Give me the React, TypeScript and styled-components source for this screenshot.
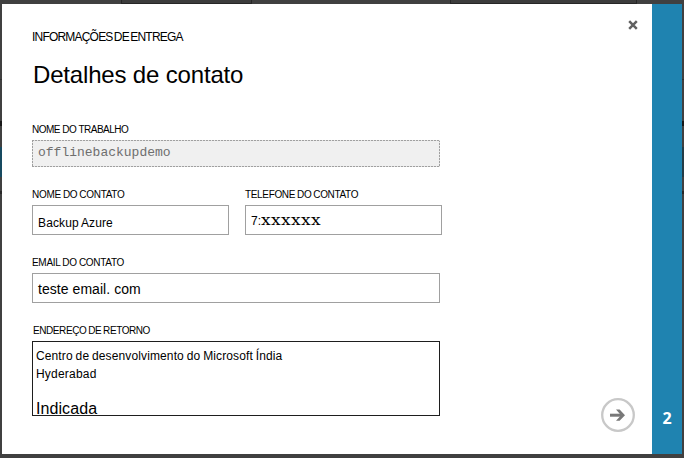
import React from "react";
import styled, { createGlobalStyle } from "styled-components";

const GlobalStyle = createGlobalStyle`
  * { box-sizing: border-box; }
  body { margin: 0; background: #404040; overflow: hidden; }
`;

const Backdrop = styled.div`
  display: grid;
  grid-template: 4px 450px 4px / 2px 680px 2px;
  width: 684px;
  height: 458px;
  background: #404040;
  color: #000;
  font-family: "Liberation Sans", Arial, sans-serif;
`;

const TopEdge = styled.div`
  grid-column: 1 / -1;
  display: flex;
  padding-left: 121px;
  gap: 198px;
`;

const TopPanel = styled.div<{ $width: number }>`
  width: ${(p) => p.$width}px;
  height: 4px;
  background: #3c3c3c;
  border: solid #262626;
  border-width: 0 1px 1px;
`;

const SideEdge = styled.div<{ $accent: string }>`
  background: linear-gradient(
    #404040 75px, #303030 75px 76px, #404040 76px 117px,
    #181818 117px 122px, #404040 122px 143px,
    ${(p) => p.$accent} 143px 173px, #404040 173px 187px,
    #282828 187px 190px, #404040 190px
  );
`;

const Dialog = styled.main`
  display: flex;
  background: #fff;
`;

const Content = styled.section`
  position: relative;
  width: 650px;
  padding: 25px 0 0 30px;
`;

const StepRail = styled.aside`
  display: flex;
  flex-direction: column;
  justify-content: flex-end;
  width: 30px;
  padding-bottom: 26px;
  background: #1f83b0;
  color: #fff;
  font: bold 16px/20px "Open Sans", sans-serif;
  text-align: center;
`;

const Eyebrow = styled.div`
  height: 16px;
  font-size: 12px;
  line-height: 16px;
  letter-spacing: -0.8px;
  word-spacing: -1.2px;
  white-space: nowrap;
`;

const Title = styled.h1`
  height: 32px;
  margin: 14px 0 0 1px;
  font-size: 24px;
  font-weight: 400;
  line-height: 32px;
  letter-spacing: -0.17px;
`;

const Form = styled.form`
  display: flex;
  flex-direction: column;
  margin-top: 33px;
`;

const FieldRow = styled.div`
  display: flex;
  gap: 16px;
`;

const Field = styled.div<{ $width: number; $after?: number }>`
  width: ${(p) => p.$width}px;
  margin-bottom: ${(p) => p.$after ?? 0}px;
`;

const Label = styled.label<{ $spacing: number; $words: number; $indent?: number }>`
  display: block;
  height: 16px;
  padding-left: ${(p) => p.$indent ?? 0}px;
  font-size: 10px;
  line-height: 12px;
  letter-spacing: ${(p) => p.$spacing}px;
  word-spacing: ${(p) => p.$words}px;
  white-space: nowrap;
`;

const Box = styled.div`
  display: flex;
  height: 30px;
  padding-left: 5px;
  border: 1px solid #a0a0a0;
  white-space: nowrap;
`;

const DisabledBox = styled(Box)`
  height: 27px;
  padding: 1px 0 0 6px;
  border: 0;
  --across: repeating-linear-gradient(90deg, #a0a0a0 0 2px, #e4e4e4 2px 3px);
  --down: repeating-linear-gradient(#a0a0a0 0 2px, #e4e4e4 2px 3px);
  background:
    var(--across) top / 100% 1px no-repeat,
    var(--across) bottom / 100% 1px no-repeat,
    var(--down) left / 1px 100% no-repeat,
    var(--down) right / 1px 100% no-repeat,
    #f0f0f0;
  color: #6e6e6e;
  font: 13px/24px "Liberation Mono", monospace;
`;

const NameBox = styled(Box)`
  font-size: 12px;
  line-height: 34px;
  letter-spacing: 0.13px;
  word-spacing: -0.7px;
`;

const PhoneBox = styled(Box)`
  font-size: 12px;
  line-height: 30px;
`;

const Masked = styled.span`
  display: inline-block;
  font: 14px/29px "DejaVu Serif", serif;
  letter-spacing: 0.3px;
  transform: scaleX(1.22);
  transform-origin: left;
`;

const EmailBox = styled(Box)`
  font-size: 14px;
  line-height: 31px;
  letter-spacing: 0.05px;
`;

const AddressBox = styled(Box)`
  flex-direction: column;
  height: 75px;
  padding: 5px 0 0 3px;
  border-color: #1e1e1e;
  font-size: 12px;
  line-height: 18px;
  overflow: hidden;
`;

const AddressLine = styled.span<{ $spacing: number; $words?: number }>`
  height: 18px;
  letter-spacing: ${(p) => p.$spacing}px;
  word-spacing: ${(p) => p.$words ?? 0}px;
`;

const Landmark = styled.span`
  margin-top: 15px;
  font-size: 16px;
  line-height: 22px;
  letter-spacing: 0.08px;
`;

const CloseButton = styled.button`
  position: absolute;
  top: 16px;
  right: 14px;
  width: 10px;
  height: 10px;
  padding: 0;
  border: 0;
  background: none;
  svg { display: block; }
`;

const NextButton = styled.button`
  position: absolute;
  right: 17px;
  bottom: 22px;
  width: 34px;
  height: 34px;
  padding: 0;
  border: 0;
  background: none;
  svg { display: block; }
`;

export default function App() {
  return (
    <>
      <GlobalStyle />
      <Backdrop>
        <TopEdge>
          <TopPanel $width={131} />
          <TopPanel $width={187} />
        </TopEdge>
        <SideEdge $accent="#174a60" />
        <Dialog>
          <Content>
            <Eyebrow>INFORMAÇÕES DE ENTREGA</Eyebrow>
            <Title>Detalhes de contato</Title>
            <Form>
              <Field $width={408} $after={22}>
                <Label $spacing={-0.5} $words={0}>NOME DO TRABALHO</Label>
                <DisabledBox>offlinebackupdemo</DisabledBox>
              </Field>
              <FieldRow>
                <Field $width={197} $after={22}>
                  <Label $spacing={-0.3} $words={-0.4}>NOME DO CONTATO</Label>
                  <NameBox>Backup Azure</NameBox>
                </Field>
                <Field $width={197} $after={22}>
                  <Label $spacing={-0.34} $words={-0.5}>TELEFONE DO CONTATO</Label>
                  <PhoneBox>7:<Masked>xxxxxx</Masked></PhoneBox>
                </Field>
              </FieldRow>
              <Field $width={408} $after={22}>
                <Label $spacing={-0.3} $words={-0.3}>EMAIL DO CONTATO</Label>
                <EmailBox>teste email. com</EmailBox>
              </Field>
              <Field $width={408}>
                <Label $spacing={-0.42} $words={-0.5} $indent={1}>ENDEREÇO DE RETORNO</Label>
                <AddressBox>
                  <AddressLine $spacing={0.12} $words={-0.6}>
                    Centro de desenvolvimento do Microsoft Índia
                  </AddressLine>
                  <AddressLine $spacing={0.2}>Hyderabad</AddressLine>
                  <Landmark>Indicada</Landmark>
                </AddressBox>
              </Field>
            </Form>
            <CloseButton type="button" aria-label="Fechar">
              <svg width="10" height="10" viewBox="0 0 10 10">
                <path d="M1.2 1.2L8.8 8.8M8.8 1.2L1.2 8.8" stroke="#606060" strokeWidth="2.5" />
              </svg>
            </CloseButton>
            <NextButton type="button" aria-label="Avançar">
              <svg width="34" height="34" viewBox="0 0 34 34" fill="none">
                <circle cx="17" cy="17" r="15.8" stroke="#c8c8c8" strokeWidth="2.3" />
                <path d="M9 17.2H21" stroke="#787878" strokeWidth="3" />
                <path d="M15 11.6H18.6L24 17.2L18.6 22.8H15L20 17.2Z" fill="#787878" />
              </svg>
            </NextButton>
          </Content>
          <StepRail>2</StepRail>
        </Dialog>
        <SideEdge $accent="#243c46" />
      </Backdrop>
    </>
  );
}
